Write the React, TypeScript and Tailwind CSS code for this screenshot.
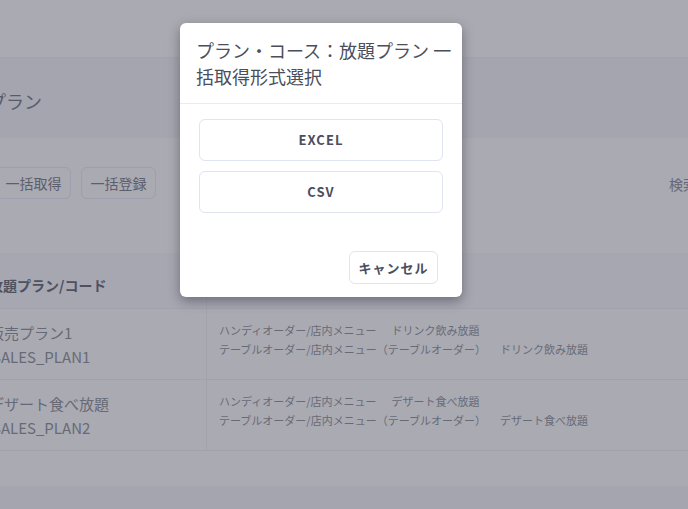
export default function App() {
  const rows = [
    {
      name: '販売プラン1',
      code: 'SALES_PLAN1',
      items: [
        ['ハンディオーダー/店内メニュー', 'ドリンク飲み放題'],
        ['テーブルオーダー/店内メニュー（テーブルオーダー）', 'ドリンク飲み放題'],
      ],
    },
    {
      name: 'デザート食べ放題',
      code: 'SALES_PLAN2',
      items: [
        ['ハンディオーダー/店内メニュー', 'デザート食べ放題'],
        ['テーブルオーダー/店内メニュー（テーブルオーダー）', 'デザート食べ放題'],
      ],
    },
  ]

  return (
    <div
      className="relative w-[688px] h-[509px] overflow-hidden bg-[#aaaab2]"
      style={{ fontFamily: '"Noto Sans CJK JP", "Noto Sans", sans-serif' }}
    >
      {/* Page behind the overlay */}
      <div className="flex flex-col">
        <div className="h-[57px]" />
        <div className="h-[81px] bg-[#a4a5ae] border-t border-[#a1a3ac] flex items-center pt-[6px]">
          <h1 className="-ml-[12px] text-[18px] text-[#585b69] leading-none">プラン</h1>
        </div>
        <div className="h-[115px] flex items-start justify-between pt-[29px]">
          <div className="flex gap-[10px] -ml-[4px]">
            <button className="h-[32px] w-[75px] rounded-[6px] border border-[#9c9fad] text-[14px] text-[#5b5e6c]">
              一括取得
            </button>
            <button className="h-[32px] w-[75px] rounded-[6px] border border-[#9c9fad] text-[14px] text-[#5b5e6c]">
              一括登録
            </button>
          </div>
          <span className="mt-[7px] -mr-[9px] text-[14px] text-[#646775]">検索</span>
        </div>
        {/* Table */}
        <div className="flex flex-col">
          <div className="h-[56px] bg-[#a6a7b0] border-b border-[#a0a2ac] flex">
            <div className="w-[207px] border-r border-[#a0a2ac] flex items-center pt-[10px]">
              <span className="-ml-[11px] text-[14px] font-bold text-[#4e5160]">放題プラン/コード</span>
            </div>
          </div>
          {rows.map((r) => (
            <div key={r.code} className="h-[71px] border-b border-[#a0a2ac] flex">
              <div className="w-[207px] border-r border-[#a0a2ac] flex flex-col pt-[12px] text-[15px] leading-[24px] text-[#676a76]">
                <span className="-ml-[11px]">{r.name}</span>
                <span className="-ml-[8px]">{r.code}</span>
              </div>
              <div className="pl-[12px] pt-[12px] flex flex-col text-[11px] leading-[19px] text-[#686b77]">
                {r.items.map(([a, b], i) => (
                  <div key={i} className="flex whitespace-nowrap">
                    <span>{a}</span>
                    <span className={i === 0 ? 'ml-[15px]' : 'ml-[14px]'}>{b}</span>
                  </div>
                ))}
              </div>
            </div>
          ))}
          <div className="h-[35px]" />
          <div className="h-[30px] bg-[#a4a5ae]" />
        </div>
      </div>

      {/* Modal */}
      <div className="absolute left-[180px] top-[23px] w-[282px] h-[274px] bg-white rounded-[6px] shadow-[0_4px_12px_rgba(40,40,55,0.45)] flex flex-col">
        <div className="pl-[16px] pr-[6px] pt-[14px] pb-[14px] border-b border-[#e8eaf0]">
          <h2 className="text-[18px] leading-[26px] text-[#4b4e5b] break-all">
            プラン・コース：放題プラン 一括取得形式選択
          </h2>
        </div>
        <div className="flex flex-col gap-[10px] px-[19px] pt-[15px]">
          <button className="h-[42px] rounded-[6px] border border-[#dfe4f0] text-[13px] font-bold tracking-[1px] text-[#4b4e5c]">
            EXCEL
          </button>
          <button className="h-[42px] rounded-[6px] border border-[#dfe4f0] text-[13px] font-bold tracking-[1px] text-[#4b4e5c]">
            CSV
          </button>
        </div>
        <div className="mt-auto flex justify-end px-[24px] pb-[13px]">
          <button className="h-[33px] w-[89px] rounded-[6px] border border-[#dfe4f0] text-[13px] font-bold tracking-[1px] text-[#4b4e5c]">
            キャンセル
          </button>
        </div>
      </div>
    </div>
  )
}
